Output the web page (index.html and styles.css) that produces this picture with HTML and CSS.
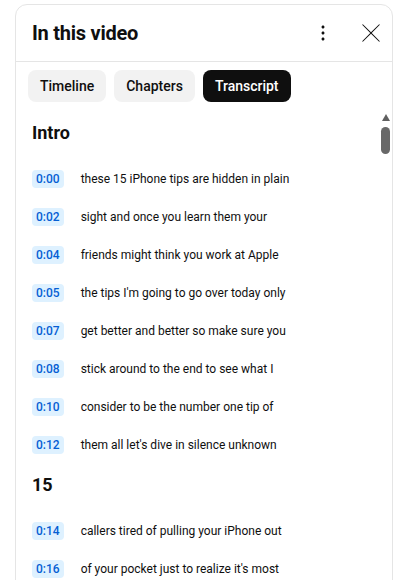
FILE: index.html
```html
<!DOCTYPE html>
<html lang="en">
<head>
<meta charset="utf-8">
<title>In this video</title>
<link rel="stylesheet" href="styles.css">
</head>
<body>
<div class="panel">
  <header class="header">
    <h2 class="title">In this video</h2>
    <div class="actions">
      <button class="icon-btn" aria-label="More">
        <svg viewBox="0 0 24 24" width="24" height="24"><path d="M12 16.5c.83 0 1.5.67 1.5 1.5s-.67 1.5-1.5 1.5-1.5-.67-1.5-1.5.67-1.5 1.5-1.5zM10.5 12c0 .83.67 1.5 1.5 1.5s1.5-.67 1.5-1.5-.67-1.5-1.5-1.5-1.5.67-1.5 1.5zm0-6c0 .83.67 1.5 1.5 1.5s1.5-.67 1.5-1.5-.67-1.5-1.5-1.5-1.5.67-1.5 1.5z"/></svg>
      </button>
      <button class="icon-btn" aria-label="Close">
        <svg viewBox="0 0 24 24" width="24" height="24"><path d="m12.71 12 8.15 8.15-.71.71L12 12.71l-8.150 8.15-.71-.71L11.29 12 3.15 3.85l.71-.71L12 11.29l8.15-8.15.71.71L12.71 12z"/></svg>
      </button>
    </div>
  </header>
  <nav class="chips">
    <span class="chip">Timeline</span>
    <span class="chip">Chapters</span>
    <span class="chip chip-active">Transcript</span>
  </nav>
  <div class="body">
    <div class="list">
      <h3 class="section">Intro</h3>
      <div class="row"><span class="ts">0:00</span><span class="line">these 15 iPhone tips are hidden in plain</span></div>
      <div class="row"><span class="ts">0:02</span><span class="line">sight and once you learn them your</span></div>
      <div class="row"><span class="ts">0:04</span><span class="line">friends might think you work at Apple</span></div>
      <div class="row"><span class="ts">0:05</span><span class="line">the tips I'm going to go over today only</span></div>
      <div class="row"><span class="ts">0:07</span><span class="line">get better and better so make sure you</span></div>
      <div class="row"><span class="ts">0:08</span><span class="line">stick around to the end to see what I</span></div>
      <div class="row"><span class="ts">0:10</span><span class="line">consider to be the number one tip of</span></div>
      <div class="row"><span class="ts">0:12</span><span class="line">them all let's dive in silence unknown</span></div>
      <h3 class="section">15</h3>
      <div class="row"><span class="ts">0:14</span><span class="line">callers tired of pulling your iPhone out</span></div>
      <div class="row"><span class="ts">0:16</span><span class="line">of your pocket just to realize it's most</span></div>
    </div>
    <div class="scrollbar">
      <span class="sb-arrow"></span>
      <span class="sb-thumb"></span>
    </div>
  </div>
</div>
</body>
</html>
```
FILE: styles.css
```css
* { box-sizing: border-box; }
html, body { margin: 0; padding: 0; background: #fff; overflow: hidden; }
body { font-family: Roboto, "Liberation Sans", Arial, sans-serif; color: #0f0f0f; }

.panel {
  margin: 4px 0 0 15px;
  width: 378px;
  height: 620px;
  border: 1px solid #e5e5e5;
  border-radius: 12px;
  overflow: hidden;
  display: flex;
  flex-direction: column;
}

.header {
  height: 57px;
  flex: none;
  display: flex;
  align-items: center;
  justify-content: space-between;
  padding: 0 1px 0 16px;
  border-bottom: 1px solid #e5e5e5;
}
.title {
  margin: 0;
  font-size: 20px;
  line-height: 28px;
  font-weight: 700;
  letter-spacing: -0.25px;
  color: #0f0f0f;
}
.actions { display: flex; gap: 8px; }
.icon-btn {
  width: 40px;
  height: 40px;
  padding: 0;
  border: 0;
  background: transparent;
  display: flex;
  align-items: center;
  justify-content: center;
}
.icon-btn svg { fill: #0f0f0f; display: block; }

.chips {
  flex: none;
  display: flex;
  gap: 8px;
  padding: 8px 12px 0;
}
.chip {
  height: 32px;
  padding: 0 12px;
  border-radius: 8px;
  background: #f2f2f2;
  font-size: 14px;
  font-weight: 500;
  line-height: 32px;
  color: #0f0f0f;
}
.chip-active { background: #0f0f0f; color: #fff; }

.body {
  flex: 1;
  display: flex;
  min-height: 0;
}
.list {
  flex: 1;
  padding: 10px 0 0 16px;
}
.section {
  margin: 9px 0 15px;
  font-size: 18px;
  line-height: 24px;
  font-weight: 700;
}
.row {
  height: 38px;
  display: flex;
  align-items: center;
}
.ts {
  flex: none;
  height: 18px;
  padding: 0 4px;
  border-radius: 4px;
  background: #def1ff;
  color: #065fd4;
  font-size: 12px;
  font-weight: 500;
  line-height: 18px;
}
.line {
  margin-left: 17px;
  font-size: 12px;
  line-height: 18px;
  color: #0f0f0f;
}

.scrollbar {
  flex: none;
  width: 9px;
  margin-right: 2px;
  padding-top: 12px;
  display: flex;
  flex-direction: column;
  align-items: center;
}
.sb-arrow {
  width: 0;
  height: 0;
  border-left: 4.5px solid transparent;
  border-right: 4.5px solid transparent;
  border-bottom: 7px solid #606060;
}
.sb-thumb {
  margin-top: 6px;
  width: 9px;
  height: 27px;
  border-radius: 5px;
  background: #686868;
}
```
